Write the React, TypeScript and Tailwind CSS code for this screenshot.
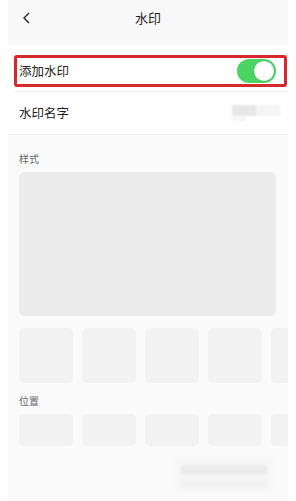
import React from "react";

const font = { fontFamily: '"Noto Sans CJK SC", "Noto Sans", sans-serif' };

function Toggle() {
  return (
    <div className="relative w-[39px] h-[24px] rounded-full bg-[#4cd463]">
      <div className="absolute right-[1px] top-[1px] w-[22px] h-[22px] rounded-full bg-white border border-[#3fbf55]" />
    </div>
  );
}

export default function App() {
  const thumbs = [0, 1, 2, 3, 4];
  return (
    <div className="w-[296px] h-[501px] bg-white overflow-hidden" style={font}>
      <div className="mx-2 w-[280px] h-full flex flex-col">
        {/* header */}
        <div className="relative h-[45px] shrink-0 bg-[#f8f8f8] flex items-center justify-center">
          <svg className="absolute left-[14px] top-[12px]" width="9" height="12" viewBox="0 0 9 12">
            <path d="M7 1 L2 6 L7 11" fill="none" stroke="#222" strokeWidth="1.4" />
          </svg>
          <span className="text-[13px] leading-none text-[#222] -mt-[10px]">水印</span>
        </div>
        {/* rows */}
        <div className="pt-[10px] bg-white">
          <div className="ml-[6px] mr-[1px] h-[32px] border-[3px] border-[#d62a2a] rounded-[3px] flex items-center justify-between pl-[2px] pr-[8px]">
            <span className="text-[12.5px] text-[#222]">添加水印</span>
            <Toggle />
          </div>
          <div className="h-[4px]" />
          <div className="ml-[7px] h-px bg-[#eeeeee]" />
          <div className="h-[42px] flex items-center justify-between pl-[11px] pr-[8px]">
            <span className="text-[12.5px] text-[#222]">水印名字</span>
            <div className="relative w-[48px] h-[18px] blur-[1px]">
              <div className="absolute left-0 top-[1px] w-[48px] h-[11px] bg-[#f4f4f4]" />
              <div className="absolute left-0 top-[1px] w-[24px] h-[11px] bg-[#e6e6e6]" />
              <div className="absolute left-0 top-[13px] w-[14px] h-[4px] bg-[#f5f5f5]" />
            </div>
          </div>
          <div className="h-px bg-[#eeeeee]" />
        </div>
        {/* section */}
        <div className="flex-1 bg-[#fafafa] overflow-hidden pl-[11px] pr-[12px]">
          <div className="mt-[18px] text-[10px] leading-[12px] text-[#666]">样式</div>
          <div className="mt-[7px] h-[144px] rounded-[6px] bg-[#ebebeb]" />
          <div className="mt-[12px] flex gap-[9px]">
            {thumbs.map((i) => (
              <div key={i} className="shrink-0 w-[54px] h-[55px] rounded-[5px] bg-[#f2f2f2]" />
            ))}
          </div>
          <div className="mt-[12px] text-[10px] leading-[12px] text-[#666]">位置</div>
          <div className="mt-[7px] flex gap-[9px]">
            {thumbs.map((i) => (
              <div key={i} className="shrink-0 w-[54px] h-[32px] rounded-[5px] bg-[#f2f2f2]" />
            ))}
          </div>
          <div className="mt-[10px] ml-[156px] w-[98px] h-[36px] relative blur-[1.5px]">
            <div className="absolute left-0 top-0 w-[98px] h-[36px] bg-[#f6f6f6]" />
            <div className="absolute left-[6px] top-[9px] w-[86px] h-[10px] bg-[#ebebeb]" />
            <div className="absolute left-[6px] top-[24px] w-[86px] h-[8px] bg-[#f0f0f0]" />
          </div>
        </div>
      </div>
    </div>
  );
}
